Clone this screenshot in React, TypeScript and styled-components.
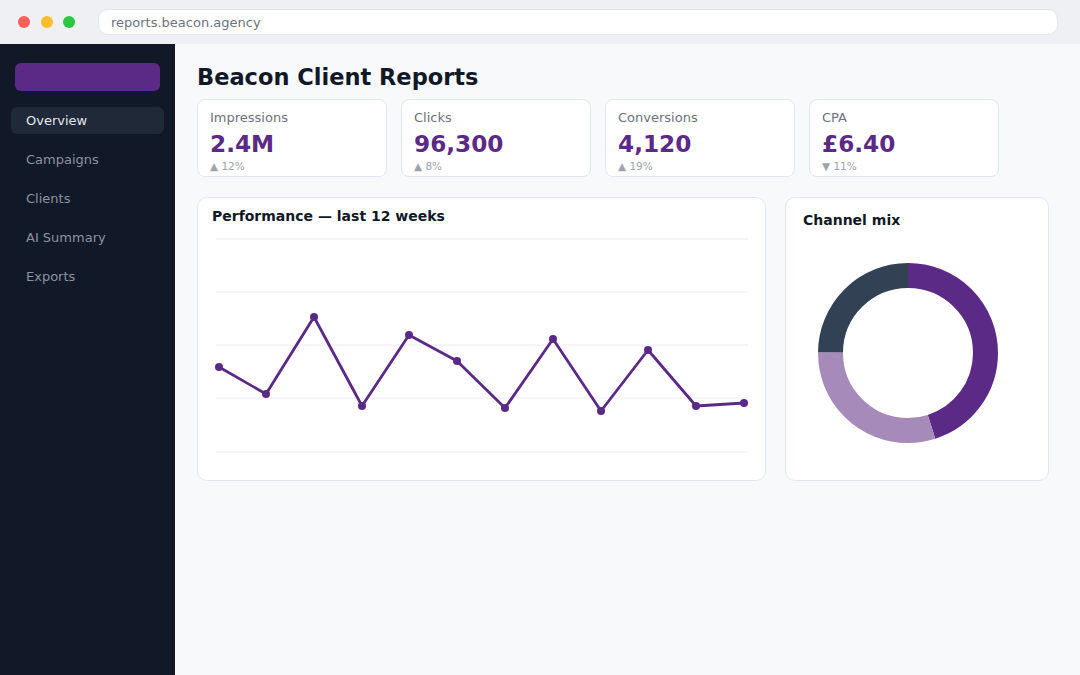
import React from "react";
import styled, { createGlobalStyle } from "styled-components";

const GlobalStyle = createGlobalStyle`
  html, body { margin: 0; padding: 0; }
  body {
    font-family: "DejaVu Sans", "Liberation Sans", sans-serif;
    background: #f8f9fb;
    width: 1080px;
    height: 675px;
    overflow: hidden;
  }
  * { box-sizing: border-box; }
`;

const PURPLE = "#5b2a86";

const Window = styled.div`
  display: flex;
  flex-direction: column;
  width: 1080px;
  height: 675px;
`;

const TopBar = styled.div`
  display: flex;
  align-items: center;
  height: 44px;
  padding: 0 22px 0 18px;
  background: #eef0f4;
  flex-shrink: 0;
`;

const Dots = styled.div`
  display: flex;
  gap: 10.5px;
  margin-right: 23px;
`;

const Dot = styled.span<{ $color: string }>`
  width: 12px;
  height: 12px;
  border-radius: 50%;
  background: ${(p) => p.$color};
`;

const UrlBar = styled.div`
  flex: 1;
  height: 26px;
  display: flex;
  align-items: center;
  padding-left: 12px;
  background: #ffffff;
  border: 1px solid #e3e6eb;
  border-radius: 10px;
  font-size: 13px;
  color: #6b7280;
`;

const Body = styled.div`
  flex: 1;
  display: flex;
  min-height: 0;
`;

const Sidebar = styled.nav`
  width: 175px;
  flex-shrink: 0;
  background: #111827;
  padding: 19px 11px;
  display: flex;
  flex-direction: column;
`;

const Brand = styled.div`
  height: 28px;
  margin: 0 4px 16px;
  border-radius: 6px;
  background: ${PURPLE};
`;

const NavList = styled.div`
  display: flex;
  flex-direction: column;
  gap: 12px;
`;

const NavItem = styled.div<{ $active?: boolean }>`
  height: 27px;
  display: flex;
  align-items: center;
  padding-left: 15px;
  border-radius: 6px;
  font-size: 13px;
  color: ${(p) => (p.$active ? "#e5e7eb" : "#8b93a1")};
  background: ${(p) => (p.$active ? "#1f2937" : "transparent")};
`;

const Main = styled.main`
  flex: 1;
  padding: 19px 31px 0 22px;
  background: #f8f9fb;
`;

const Title = styled.h1`
  margin: 0;
  font-size: 22.5px;
  line-height: 28px;
  font-weight: 700;
  color: #111827;
`;

const KpiGrid = styled.div`
  display: grid;
  grid-template-columns: repeat(4, 190px);
  gap: 14px;
  margin-top: 8px;
`;

const KpiCard = styled.div`
  height: 78px;
  background: #ffffff;
  border: 1px solid #e2e6ee;
  border-radius: 8px;
  padding: 10px 12px 0;
`;

const KpiLabel = styled.div`
  font-size: 13px;
  line-height: 16px;
  color: #6b7280;
`;

const KpiValue = styled.div`
  margin-top: 3px;
  font-size: 23.2px;
  line-height: 30px;
  font-weight: 700;
  color: ${PURPLE};
`;

const KpiDelta = styled.div`
  font-size: 10.5px;
  line-height: 14px;
  color: #9ca3af;
`;

const ChartRow = styled.div`
  display: grid;
  grid-template-columns: 569px 264px;
  gap: 19px;
  margin-top: 20px;
`;

const Card = styled.section`
  height: 284px;
  background: #ffffff;
  border: 1px solid #e2e6ee;
  border-radius: 10px;
`;

const LineCard = styled(Card)`
  padding-top: 9px;
`;

const DonutCard = styled(Card)`
  padding: 13px 17px 0;
`;

const CardTitle = styled.h2<{ $inset?: number }>`
  margin: 0;
  padding: 0 ${(p) => p.$inset ?? 0}px;
  font-size: 14px;
  line-height: 18px;
  font-weight: 700;
  color: #111827;
`;

const ChartSvg = styled.svg`
  display: block;
`;

const DonutSvg = styled.svg`
  display: block;
  margin-top: 19px;
`;

const kpis = [
  { label: "Impressions", value: "2.4M", delta: "▲ 12%" },
  { label: "Clicks", value: "96,300", delta: "▲ 8%" },
  { label: "Conversions", value: "4,120", delta: "▲ 19%" },
  { label: "CPA", value: "£6.40", delta: "▼ 11%" },
];

const nav = ["Overview", "Campaigns", "Clients", "AI Summary", "Exports"];

// weekly values plotted in chart pixel space
const points: [number, number][] = [
  [21, 143], [68, 170], [116, 93], [164, 182], [211, 111], [259, 137],
  [307, 184], [355, 115], [403, 187], [450, 126], [498, 182], [546, 179],
];

const gridYs = [15, 68, 121, 174, 228];

function LineChart() {
  return (
    <ChartSvg width={567} height={247} viewBox="0 1 567 247">
      {gridYs.map((y) => (
        <line key={y} x1={18} x2={550} y1={y} y2={y} stroke="#e9ecf2" strokeWidth={1} />
      ))}
      <polyline
        points={points.map((p) => p.join(",")).join(" ")}
        fill="none"
        stroke={PURPLE}
        strokeWidth={2.8}
        strokeLinejoin="round"
      />
      {points.map(([x, y], i) => (
        <circle key={i} cx={x} cy={y} r={4} fill={PURPLE} />
      ))}
    </ChartSvg>
  );
}

const segments = [
  { share: 0.45, color: PURPLE },
  { share: 0.3, color: "#a58aba" },
  { share: 0.25, color: "#334155" },
];

function Donut() {
  const r = 77.5;
  const c = 2 * Math.PI * r;
  let offset = 0;
  return (
    <DonutSvg width={210} height={210} viewBox="0 0 210 210">
      <g transform="rotate(-90 105 105)">
        {segments.map((s, i) => {
          const len = s.share * c;
          const el = (
            <circle
              key={i}
              cx={105}
              cy={105}
              r={r}
              fill="none"
              stroke={s.color}
              strokeWidth={25}
              strokeDasharray={`${len} ${c - len}`}
              strokeDashoffset={-offset}
            />
          );
          offset += len;
          return el;
        })}
      </g>
    </DonutSvg>
  );
}

export default function App() {
  return (
    <>
      <GlobalStyle />
      <Window>
        <TopBar>
          <Dots>
            <Dot $color="#ff5f57" />
            <Dot $color="#febc2e" />
            <Dot $color="#28c840" />
          </Dots>
          <UrlBar>reports.beacon.agency</UrlBar>
        </TopBar>
        <Body>
          <Sidebar>
            <Brand />
            <NavList>
              {nav.map((n, i) => (
                <NavItem key={n} $active={i === 0}>
                  {n}
                </NavItem>
              ))}
            </NavList>
          </Sidebar>
          <Main>
            <Title>Beacon Client Reports</Title>
            <KpiGrid>
              {kpis.map((k) => (
                <KpiCard key={k.label}>
                  <KpiLabel>{k.label}</KpiLabel>
                  <KpiValue>{k.value}</KpiValue>
                  <KpiDelta>{k.delta}</KpiDelta>
                </KpiCard>
              ))}
            </KpiGrid>
            <ChartRow>
              <LineCard>
                <CardTitle $inset={14}>Performance — last 12 weeks</CardTitle>
                <LineChart />
              </LineCard>
              <DonutCard>
                <CardTitle>Channel mix</CardTitle>
                <Donut />
              </DonutCard>
            </ChartRow>
          </Main>
        </Body>
      </Window>
    </>
  );
}
